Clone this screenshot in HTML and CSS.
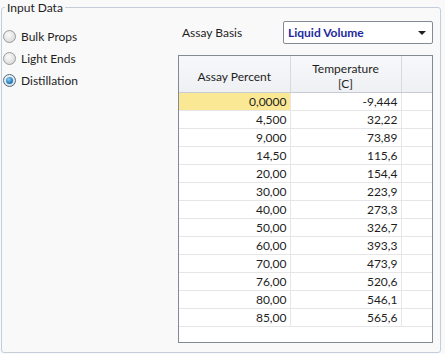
FILE: index.html
```html
<!DOCTYPE html>
<html lang="en">
<head>
    <meta charset="UTF-8">
    <title>Input Data</title>
    <link rel="stylesheet" href="styles.css">
</head>
<body>
    <fieldset class="group">
        <legend>Input Data</legend>
        <div class="group-body">
            <!-- Input type options -->
            <div class="options">
                <label class="radio"><span class="dot"></span>Bulk Props</label>
                <label class="radio"><span class="dot"></span>Light Ends</label>
                <label class="radio checked"><span class="dot"></span>Distillation</label>
            </div>

            <div class="main">
                <div class="basis-row">
                    <span class="basis-label">Assay Basis</span>
                    <div class="combo">
                        <span class="combo-text">Liquid Volume</span>
                        <span class="combo-arrow"></span>
                    </div>
                </div>

                <!-- Distillation grid -->
                <div class="grid">
                    <table>
                        <colgroup>
                            <col class="c1">
                            <col class="c2">
                            <col>
                        </colgroup>
                        <thead>
                            <tr>
                                <th>Assay Percent</th>
                                <th>Temperature<br>[C]</th>
                                <th></th>
                            </tr>
                        </thead>
                        <tbody>
                            <tr><td class="sel">0,0000</td><td>-9,444</td><td></td></tr>
                            <tr><td>4,500</td><td>32,22</td><td></td></tr>
                            <tr><td>9,000</td><td>73,89</td><td></td></tr>
                            <tr><td>14,50</td><td>115,6</td><td></td></tr>
                            <tr><td>20,00</td><td>154,4</td><td></td></tr>
                            <tr><td>30,00</td><td>223,9</td><td></td></tr>
                            <tr><td>40,00</td><td>273,3</td><td></td></tr>
                            <tr><td>50,00</td><td>326,7</td><td></td></tr>
                            <tr><td>60,00</td><td>393,3</td><td></td></tr>
                            <tr><td>70,00</td><td>473,9</td><td></td></tr>
                            <tr><td>76,00</td><td>520,6</td><td></td></tr>
                            <tr><td>80,00</td><td>546,1</td><td></td></tr>
                            <tr><td>85,00</td><td>565,6</td><td></td></tr>
                        </tbody>
                    </table>
                </div>
            </div>
        </div>
    </fieldset>
</body>
</html>
```

FILE: styles.css
```css
/* Basic Styles */
body {
    font-family: 'Lato', 'Noto Sans', sans-serif;
    font-size: 12px;
    background-color: #f9f9f9;
    color: #000;
    margin: 0;
    padding: 0;
}

/* Group box */
.group {
    margin: 0 4px 1px 1px;
    padding: 0;
    border: 1px solid #c4ced8;
    border-radius: 3px;
    height: 353px;
    box-sizing: border-box;
    min-width: 0;
}

.group legend {
    margin-left: 3px;
    padding: 0 2px;
    line-height: 15px;
    color: #1e1e1e;
}

.group-body {
    display: flex;
}

/* Radio options */
.options {
    width: 176px;
    padding-top: 10px;
    display: flex;
    flex-direction: column;
}

.radio {
    display: flex;
    align-items: center;
    height: 22px;
    padding-left: 1px;
    color: #1e1e1e;
}

.dot {
    width: 11px;
    height: 11px;
    margin-right: 5px;
    border: 1px solid #9a9a9a;
    border-radius: 50%;
    background: radial-gradient(circle at 40% 35%, #fafafa 0%, #e2e2e2 60%, #cfcfcf 100%);
    display: flex;
    align-items: center;
    justify-content: center;
}

.checked .dot {
    border-color: #4a6d8c;
}

.checked .dot::after {
    content: "";
    width: 7px;
    height: 7px;
    border-radius: 50%;
    background: radial-gradient(circle at 40% 35%, #8fd0f5 0%, #2b85c5 55%, #10507f 100%);
}

/* Right side */
.main {
    width: 255px;
    padding-top: 6px;
}

.basis-row {
    display: flex;
    align-items: center;
    height: 23px;
}

.basis-label {
    width: 101px;
    padding-left: 4px;
    color: #1e1e1e;
}

.combo {
    width: 138px;
    height: 21px;
    border: 1px solid #858b95;
    border-radius: 2px;
    background-color: #fff;
    display: flex;
    align-items: center;
    justify-content: space-between;
    padding: 0 6px 0 4px;
}

.combo-text {
    font-weight: bold;
    color: #1c2a9c;
}

.combo-arrow {
    width: 0;
    height: 0;
    border-left: 4px solid transparent;
    border-right: 4px solid transparent;
    border-top: 4px solid #202020;
}

/* Grid */
.grid {
    margin-top: 11px;
    height: 286px;
    border: 1px solid #828a94;
    background-color: #fff;
    overflow: hidden;
}

.grid table {
    width: 100%;
    table-layout: fixed;
    border-collapse: collapse;
}

.c1, .c2 {
    width: 111px;
}

.grid th {
    height: 32px;
    padding: 4px 0 0;
    font-weight: normal;
    color: #1e1e1e;
    line-height: 15px;
    background: linear-gradient(#f7f8fa, #eef0f3);
    border-right: 1px solid #d7d9dd;
    border-bottom: 1px solid #c8ccd2;
}

.grid th:last-child {
    border-right: none;
}

.grid td {
    height: 17px;
    padding: 0 3px 0 0;
    text-align: right;
    border-right: 1px solid #e6e6e6;
    border-bottom: 1px solid #e6e6e6;
    color: #1e1e1e;
}

.grid td:last-child {
    border-right: none;
}

.grid td.sel {
    background-color: #fbe894;
}
```
